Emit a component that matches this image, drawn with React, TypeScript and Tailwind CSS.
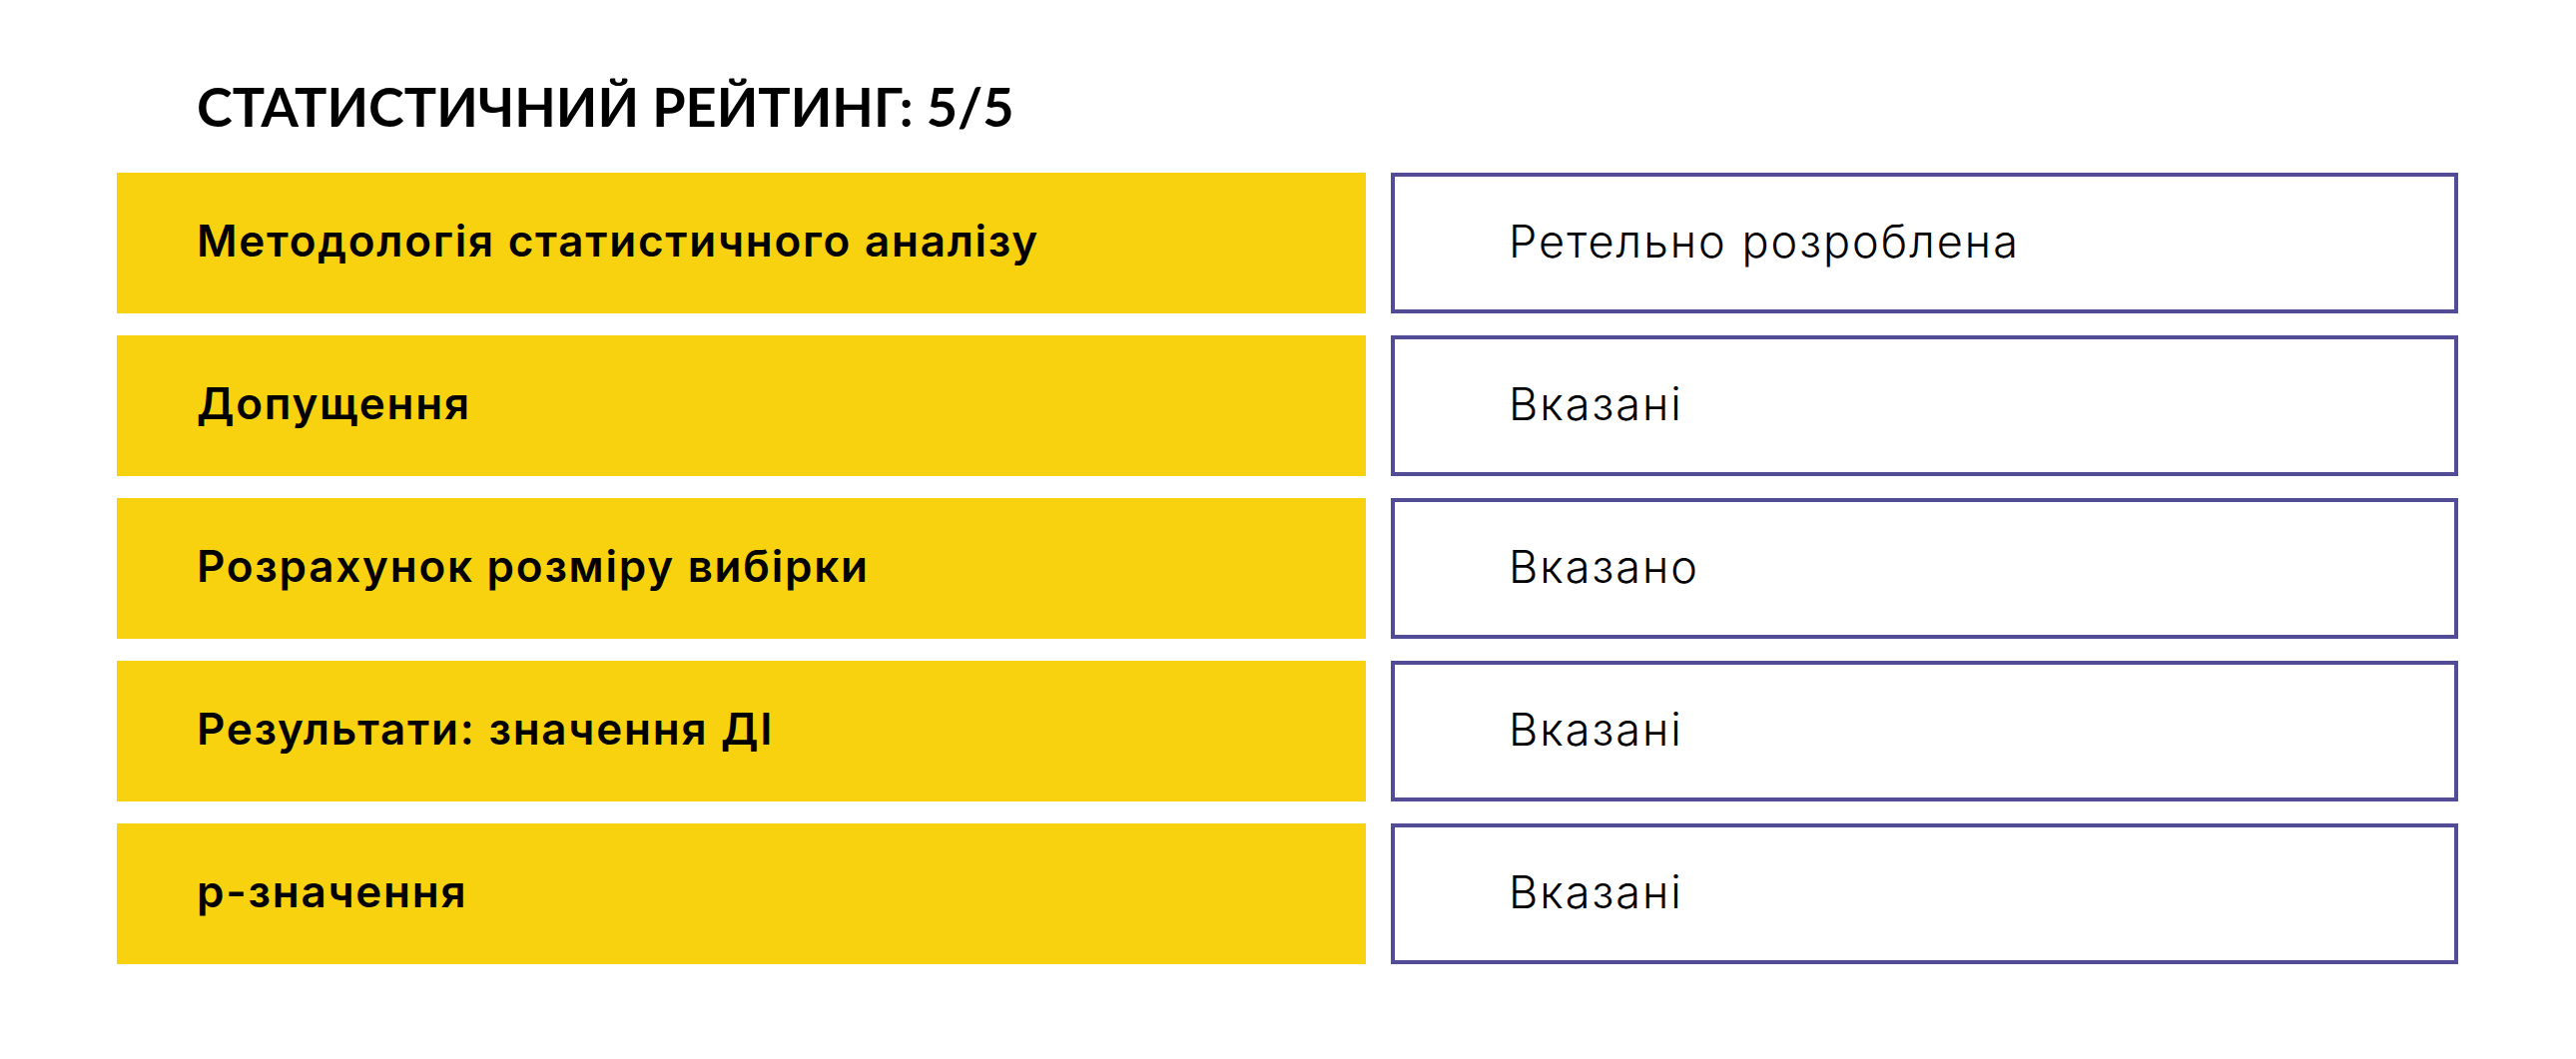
import React from 'react'

const rows = [
  { label: 'Методологія статистичного аналізу', value: 'Ретельно розроблена' },
  { label: 'Допущення', value: 'Вказані' },
  { label: 'Розрахунок розміру вибірки', value: 'Вказано' },
  { label: 'Результати: значення ДІ', value: 'Вказані' },
  { label: 'p-значення', value: 'Вказані' },
]

export default function App() {
  return (
    <div className="w-[2580px] h-[1061px] bg-white text-black" style={{ fontFamily: 'Inter, "Noto Sans", sans-serif' }}>
      <div className="pl-[117px] pt-[80px]">
        {/* Title */}
        <h1 className="pl-[80px] text-[54px] font-bold leading-none uppercase" style={{ fontFamily: 'Lato, sans-serif' }}>
          Статистичний рейтинг: 5/5
        </h1>

        {/* Rating table */}
        <div className="mt-[39px] flex flex-col gap-[22px]">
          {rows.map((row, idx) => (
            <div key={idx} className="flex gap-[25px]">
              <div className="w-[1251px] h-[141px] bg-[#f8d20f] flex items-center pl-[80px] pb-[5px]">
                <span className="text-[44px] font-semibold leading-none tracking-[0.04em]">{row.label}</span>
              </div>
              <div className="w-[1069px] h-[141px] border-4 border-[#524b96] flex items-center pl-[114px] pb-[5px]">
                <span className="text-[45px] font-light leading-none tracking-[0.045em]">{row.value}</span>
              </div>
            </div>
          ))}
        </div>
      </div>
    </div>
  )
}
